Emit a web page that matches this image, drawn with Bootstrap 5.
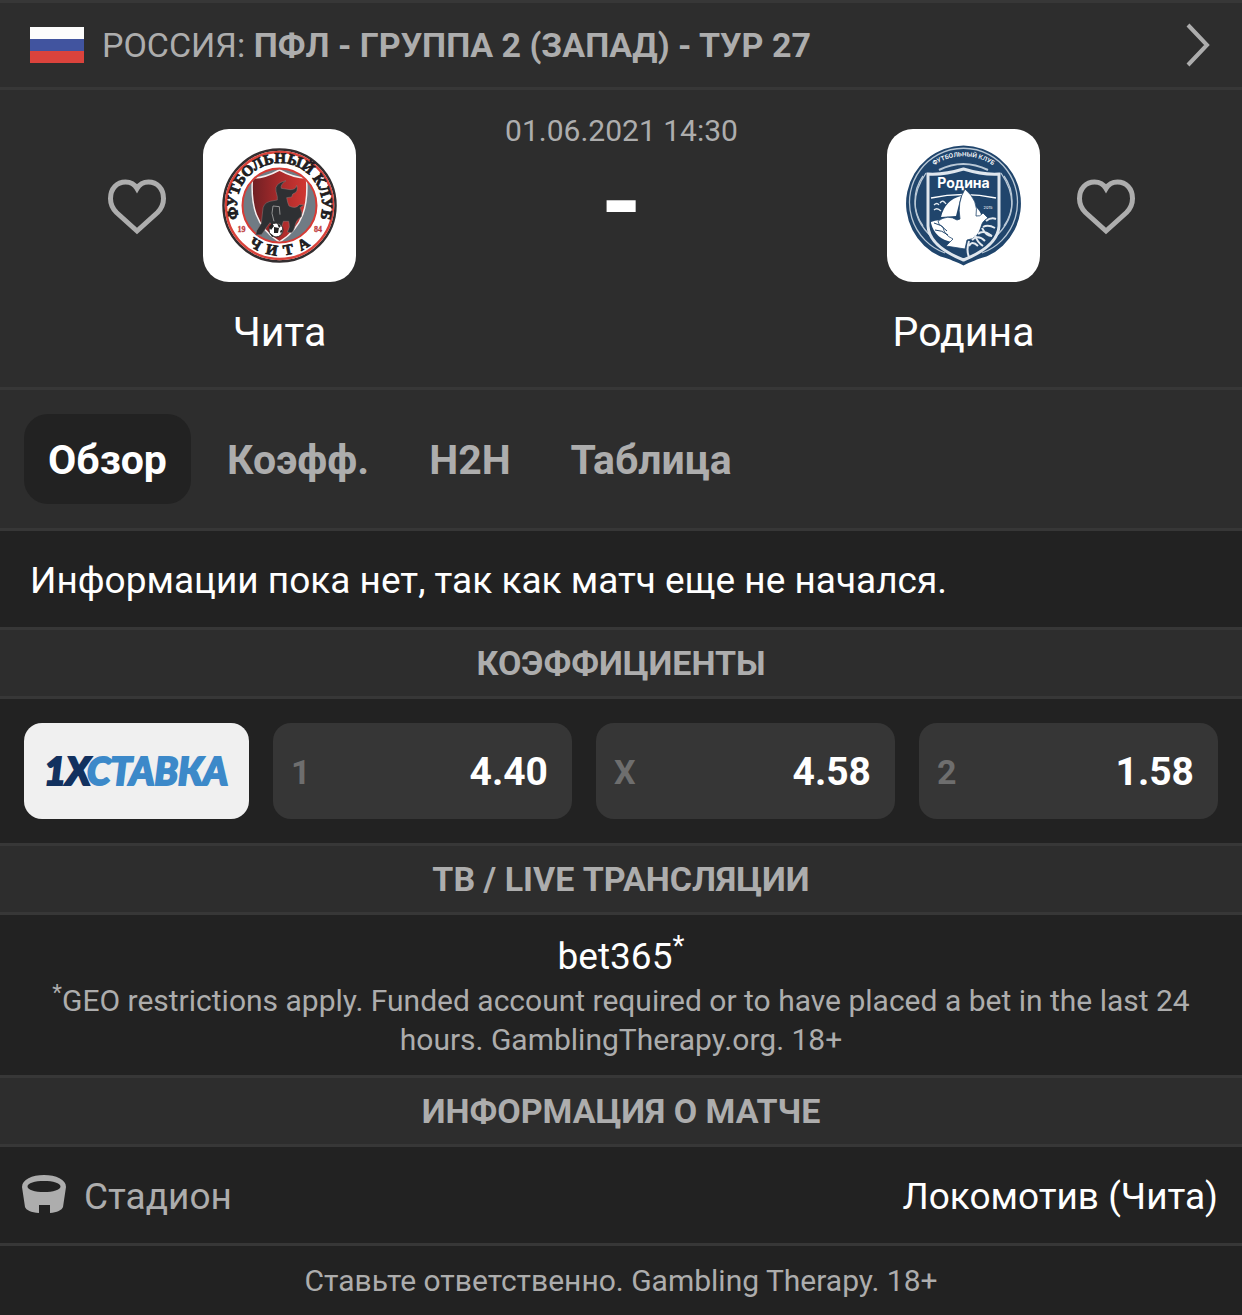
<!DOCTYPE html>
<html lang="ru">
<head>
<meta charset="utf-8">
<meta name="viewport" content="width=device-width, initial-scale=1">
<title>Чита – Родина</title>
<link href="https://cdn.jsdelivr.net/npm/bootstrap@5.3.0/dist/css/bootstrap.min.css" rel="stylesheet">
<style>
  body { background: #222; color: #fff; font-family: Roboto, "Noto Sans", sans-serif; font-size: 37px; line-height: 48px; }
  .line-b { border-bottom: 3px solid #373737; }
  .line-t { border-top: 3px solid #373737; }
  .surface { background: #2d2d2d; }
  .soft { color: #adadad; }
  .league { height: 90px; padding: 0 30px; font-size: 34px; color: #adadad; text-decoration: none; }
  .flag { width: 54px; height: 36px; margin-right: 18px; }
  .match { padding: 39px 106px 30px 107px; }
  .fav { width: 60px; height: 153px; background: none; border: 0; padding: 2px 0 0; color: #adadad; }
  .team { width: 153px; margin: 0 36px; }
  .crest { width: 153px; height: 153px; border-radius: 26px; background: #fff; }
  .team-name { font-size: 41px; line-height: 50px; margin-top: 25px; }
  .kickoff { font-size: 30px; line-height: 36px; margin-top: -16px; }
  .score { font-size: 105px; line-height: 108px; }
  .tabs { padding: 24px; gap: 12px; }
  .tab-btn { height: 90px; padding: 2px 24px 0; border-radius: 24px; border: 0; background: none; color: #adadad; font-size: 41px; font-weight: 700; }
  .tab-btn.active { background: #222; color: #fff; }
  .notice { padding: 26px 30px 22px; margin: 0; }
  .section-title { margin: 0; padding: 12px 0; font-size: 34px; line-height: 42px; font-weight: 700; color: #adadad; }
  .odds { padding: 24px; gap: 24px; }
  .bookie { width: 225px; height: 96px; border-radius: 18px; background: #f0f0f0; }
  .odd { height: 96px; border: 0; border-radius: 18px; background: #363636; color: #fff; padding: 2px 24px 0 18px; font-size: 39px; font-weight: 700; flex: 1 1 0; }
  .odd-key { color: #6e6e6e; font-size: 34px; }
  .tv { padding: 18px 24px 16px; }
  .tv a { color: #fff; text-decoration: none; }
  .tv-note { font-size: 30px; line-height: 39px; margin: 0; }
  .stadium { padding: 24px 24px 24px 22px; }
  .stadium span { padding-top: 2px; margin-bottom: -2px; }
  .stadium svg { margin-right: 18px; }
  .legal { font-size: 30px; line-height: 39px; padding: 15px 24px; }
</style>
<script src="https://cdn.jsdelivr.net/npm/bootstrap@5.3.0/dist/js/bootstrap.bundle.min.js"></script>
</head>
<body>
<header class="surface">
  <a href="#" class="league line-t line-b d-flex align-items-center">
    <svg class="flag flex-shrink-0" viewBox="0 0 54 36" role="img" aria-label="Россия"><path fill="#fcfcfc" d="M0 0h54v12H0z"/><path fill="#41549f" d="M0 12h54v12H0z"/><path fill="#db433c" d="M0 24h54v12H0z"/></svg>
    <span class="flex-grow-1">РОССИЯ: <b>ПФЛ - ГРУППА 2 (ЗАПАД) - ТУР 27</b></span>
    <svg width="28" height="44" viewBox="0 0 28 44" fill="none" stroke="#adadad" stroke-width="4" aria-hidden="true"><path d="M4 2l19 20L4 42"/></svg>
  </a>
  <section class="match line-b d-flex align-items-start">
    <button class="fav d-flex align-items-center" aria-label="Добавить Читу в избранное"><svg width="60" height="56" viewBox="0 0 60 56" fill="none" stroke="currentColor" stroke-width="5"><path d="M30 52 9.500 33.500C5 29 3.500 24.500 3.500 19.500 3.500 9.500 10 3 18.500 3 24 3 28 6 30 9.500 32 6 36 3 41.500 3 50 3 56.500 9.500 56.500 19.500 56.500 24.500 55 29 50.500 33.500Z"/></svg></button>
    <div class="team d-flex flex-column align-items-center">
      <svg class="crest" viewBox="0 0 153 153" role="img" aria-label="ФК Чита">
        <defs>
          <linearGradient id="red" x1="0" x2="1"><stop offset="0" stop-color="#6f2024"/><stop offset=".5" stop-color="#a82a2b"/><stop offset="1" stop-color="#d23732"/></linearGradient>
          <path id="arcTop" d="M36.500 91A42.500 42.500 0 1 1 116.500 91"/>
          <path id="arcBottom" d="M26 76a50.500 50.500 0 0 0 101 0"/>
          <clipPath id="disc"><circle cx="76.500" cy="76.500" r="36"/></clipPath>
        </defs>
        <circle cx="76.500" cy="76.500" r="56" fill="#fff" stroke="#332e30" stroke-width="2.500"/>
        <circle cx="76.500" cy="76.500" r="53.500" fill="none" stroke="#d9433b" stroke-width="2.500"/>
        <circle cx="76.500" cy="76.500" r="37" fill="#707b84" stroke="#d63b35" stroke-width="2"/>
        <g clip-path="url(#disc)"><path d="M76.500 41c9 5 18 8 27 8 2 27-3 49-27 64-24-15-29-37-27-64 9 0 18-3 27-8z" fill="url(#red)" stroke="#f6eeee" stroke-width="1.500"/></g>
        <g transform="scale(.3333) translate(-39 -39)">
          <path fill="#2e3033" stroke="#8d7b7c" stroke-width="1.500" d="M262 242L258 226Q252 202 288 194Q270 206 274 217L300 221Q318 222 320 208Q327 228 308 234L305 243L290 245Q293 262 297 270Q318 280 328 266L341 267L330 275Q339 290 334 302Q318 312 315 330Q312 345 304 350L292 348Q302 334 296 316L280 316L276 330L245 326L240 320L228 336Q220 350 214 356L197 357L200 344L214 322L218 285Q218 262 240 256L262 252Z"/>
          <path d="M252 316L246 292L249 270L268 272L270 296" fill="none" stroke="#a5a5a5" stroke-width="2.500"/>
        </g>
        <circle cx="73" cy="101" r="7" fill="#fff" stroke="#292929"/><path d="M71 98l5 1-1 5h-4zM66 98l3-4 2 3-3 4zM74 94l4 3-2 2zM67 104l4 3-2 1zM77 102l3-2-2 5z" fill="#222"/>
        <g fill="#211d1f" font-family="Liberation Serif, serif" font-weight="700" stroke="#211d1f" stroke-width=".8">
          <text font-size="15" text-anchor="middle"><textPath href="#arcTop" startOffset="50%">ФУТБОЛЬНЫЙ КЛУБ</textPath></text>
          <text font-size="15" text-anchor="middle"><textPath href="#arcBottom" startOffset="50%">Ч&#160; И&#160; Т&#160; А</textPath></text>
        </g>
        <g fill="#bf403f" stroke="#bf403f" stroke-width=".3" font-family="Liberation Serif, serif" font-size="8" font-weight="700" text-anchor="middle"><text x="38.500" y="103">19</text><text x="115" y="103">84</text></g>
      </svg>
      <span class="team-name">Чита</span>
    </div>
    <div class="flex-grow-1 text-center">
      <div class="kickoff soft">01.06.2021 14:30</div>
      <div class="score fw-bold">-</div>
    </div>
    <div class="team d-flex flex-column align-items-center">
      <svg class="crest" viewBox="0 0 153 153" role="img" aria-label="ФК Родина">
        <defs><path id="arcR" d="M41 41a53 53 0 0 1 71 0"/></defs>
        <path d="M76.500 16.500a58 58 0 0 1 23 111c-10 3-15 5-23 9-8-4-13-6-23-9a58 58 0 0 1 23-111z" fill="#20456c"/>
        <g fill="none" stroke="#b9c8d6" stroke-width="1.300">
          <path d="M58 124a54 54 0 1 1 37 0"/><path d="M52 114Q12 84 39 44M101 114Q141 84 114 44"/><path d="M36 97a43 43 0 0 1 0-50M117 97a43 43 0 0 0 0-50"/><path d="M52 41q24-12 49 0" stroke-width="2"/>
        </g>
        <path d="M41 45q16 1 35.500-5 19.500 6 35.500 5v52q-1 20-35.500 34Q42 117 41 97z" fill="#20456c" stroke="#dfe6ed" stroke-width="3"/>
        <path d="M44 69q32-7 65 0" fill="none" stroke="#fff" stroke-width="1.500"/>
        <path d="M54 88q4-17 20-21l-5 20zM86 76q8 5 9 13l-9-2z" fill="#fff"/>
        <path d="M44 93q9-4 17 1l12 16-8 3q-17-3-21-19z" fill="#fff"/>
        <path d="M78 60q14 12 11 27 4 1 7-3l5 5q-6 3-7 9-3 12-14 13l-2 9-19-3 7-7q-9-4-10-12-5-2-5-6 10-7 19-1l3-1q-3-17 5-30z" fill="#fff" stroke="#20456c" stroke-width=".8"/>
        <g fill="none" stroke="#e4eaf0" stroke-width="2"><path d="M109 90q-5-2-10 2M108 99q-7-4-12-1M105 107q-9-7-14-2M98 112q-7-7-13-1M91 117q-6-6-9 0M82 112q-3 9 0 16M88 106q2 7 8 11M95 99q4 8 10 8"/><path d="M47 94q7 1 13 8M48 101q7 0 13 5" stroke="#20456c" stroke-width="1"/><path d="M47 76q3-3 5 0M53 74q3-4 6 1M47 81q3-3 7 1" stroke-width="1.300"/></g>
        <g fill="#fff" text-anchor="middle" font-family="Inter, sans-serif"><text x="76.500" y="59" font-size="14" font-weight="700">Родина</text><text font-size="6" font-weight="600"><textPath href="#arcR" startOffset="50%">ФУТБОЛЬНЫЙ КЛУБ</textPath></text><text x="101" y="80" font-size="4">2015</text></g>
      </svg>
      <span class="team-name">Родина</span>
    </div>
    <button class="fav d-flex align-items-center" aria-label="Добавить Родину в избранное"><svg width="60" height="56" viewBox="0 0 60 56" fill="none" stroke="currentColor" stroke-width="5"><path d="M30 52 9.500 33.500C5 29 3.500 24.500 3.500 19.500 3.500 9.500 10 3 18.500 3 24 3 28 6 30 9.500 32 6 36 3 41.500 3 50 3 56.500 9.500 56.500 19.500 56.500 24.500 55 29 50.500 33.500Z"/></svg></button>
  </section>
  <nav class="tabs line-b d-flex">
    <button class="tab-btn active" aria-current="page">Обзор</button>
    <button class="tab-btn">Коэфф.</button>
    <button class="tab-btn">H2H</button>
    <button class="tab-btn">Таблица</button>
  </nav>
</header>
<main>
  <p class="notice">Информации пока нет, так как матч еще не начался.</p>
  <h2 class="section-title surface line-t line-b text-center">КОЭФФИЦИЕНТЫ</h2>
  <div class="odds d-flex">
    <a href="#" class="bookie d-flex flex-shrink-0" aria-label="1XСТАВКА">
      <svg width="225" height="96" viewBox="0 0 225 96" font-family="Lato, sans-serif" font-weight="900" font-style="italic" font-size="38" stroke-width="2"><text x="20" y="62" fill="#12315f" stroke="#12315f">1X</text><text x="63" y="62" fill="#3c89c9" stroke="#3c89c9">СТАВКА</text></svg>
    </a>
    <button class="odd d-flex align-items-center justify-content-between"><span class="odd-key">1</span><span>4.40</span></button>
    <button class="odd d-flex align-items-center justify-content-between"><span class="odd-key">X</span><span>4.58</span></button>
    <button class="odd d-flex align-items-center justify-content-between"><span class="odd-key">2</span><span>1.58</span></button>
  </div>
  <h2 class="section-title surface line-t line-b text-center">ТВ / LIVE ТРАНСЛЯЦИИ</h2>
  <div class="tv text-center">
    <a href="#">bet365<sup>*</sup></a>
    <p class="tv-note soft"><sup>*</sup>GEO restrictions apply. Funded account required or to have placed a bet in the last 24 hours. GamblingTherapy.org. 18+</p>
  </div>
  <h2 class="section-title surface line-t line-b text-center">ИНФОРМАЦИЯ О МАТЧЕ</h2>
  <div class="stadium line-b d-flex align-items-center">
    <svg width="44" height="40" viewBox="0 0 44 40" aria-hidden="true"><path fill="#adadad" fill-rule="evenodd" d="M22 0c12 0 22 4.500 22 12l-3 20c-1 3-6 5.500-13 6v-8H17v8C9 37.500 4 35 3 32L0 12C0 4.500 10 0 22 0zm0 6C13 6 5.500 8 5.500 11.500S13 17 22 17s16.500-2 16.500-5.500S31 6 22 6z"/></svg>
    <span class="soft flex-grow-1">Стадион</span>
    <span>Локомотив (Чита)</span>
  </div>
</main>
<footer class="legal soft text-center">Ставьте ответственно. Gambling Therapy. 18+</footer>
</body>
</html>
